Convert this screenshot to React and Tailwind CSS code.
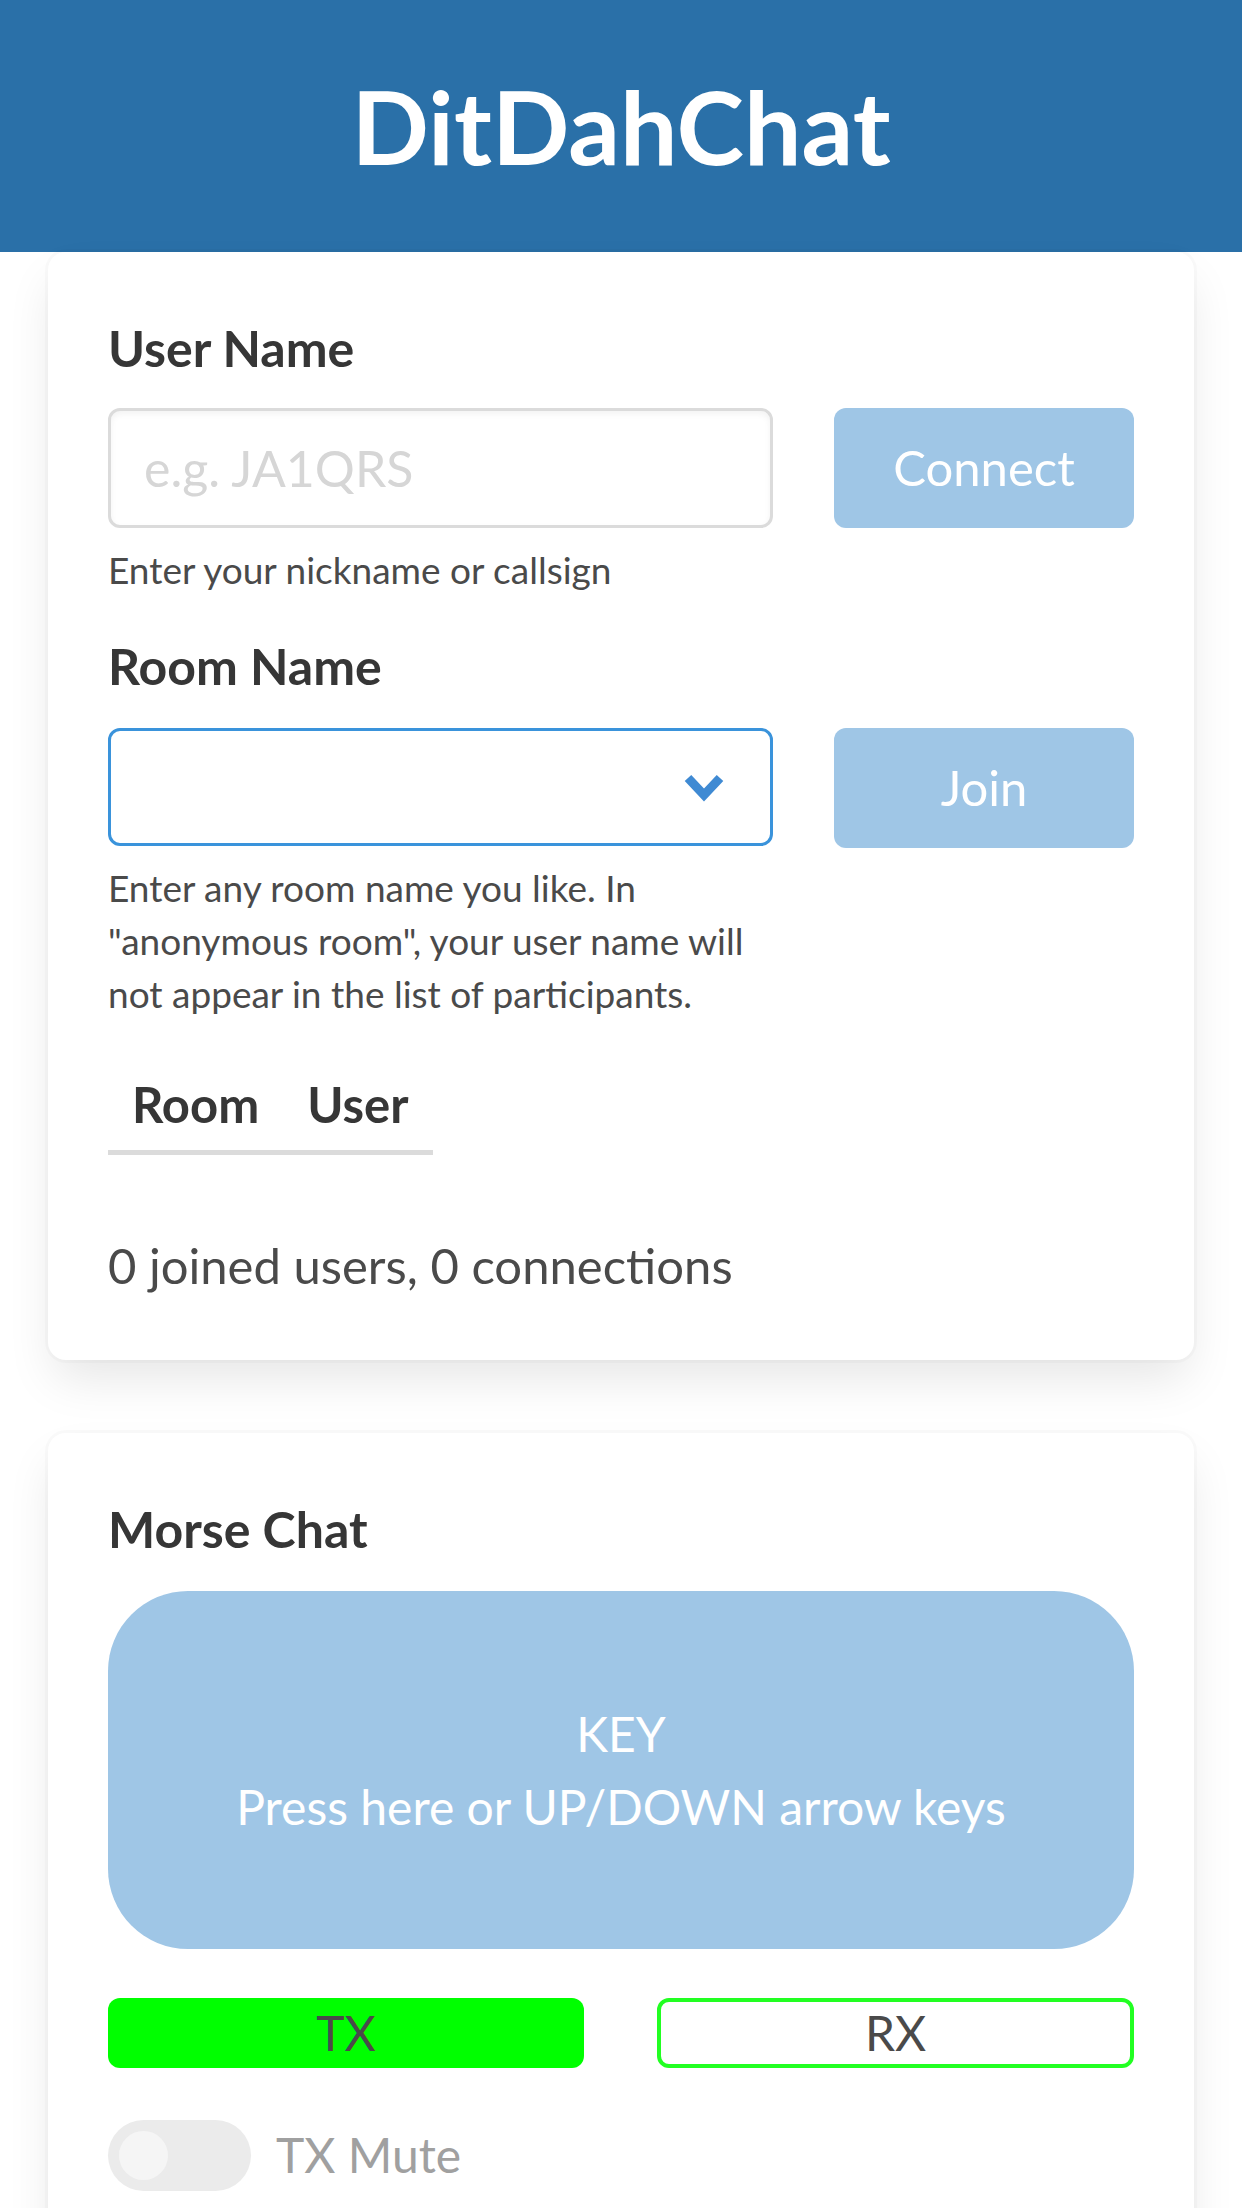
import { useState } from 'react';

const font = { fontFamily: 'Lato, "Open Sans", sans-serif' };

function ChevronDown() {
    return (
        <svg width="42" height="30" viewBox="0 0 42 30" fill="none">
            <polyline points="5,6 21,23 37,6" stroke="#3f8ad3" strokeWidth="9" strokeLinecap="butt" strokeLinejoin="miter" />
        </svg>
    );
}

export default function App() {
    const [tab, setTab] = useState('room');
    const [muted, setMuted] = useState(false);

    return (
        <div className="w-[1242px] min-h-[2208px] bg-white text-[#4a4a4a]" style={font}>
            {/* Header */}
            <header className="h-[252px] bg-[#2a70a8] flex items-center justify-center">
                <h1 className="text-[102px] font-bold text-white leading-none">DitDahChat</h1>
            </header>

            {/* Connection card */}
            <section className="mx-[48px] bg-white rounded-[18px] px-[60px] pt-[60px] pb-[59px] shadow-[0_24px_48px_-6px_rgba(10,10,10,0.1),0_0_0_3px_rgba(10,10,10,0.02)]">
                <label className="block text-[50px] leading-[72px] font-bold text-[#363636]">User Name</label>
                <div className="mt-[24px] flex gap-[61px]">
                    <div className="flex-1">
                        <input
                            placeholder="e.g. JA1QRS"
                            className="w-full h-[120px] rounded-[12px] border-[3px] border-[#dbdbdb] px-[33px] text-[50px] text-[#363636] placeholder:text-[#d6d6d6] outline-none shadow-[inset_0_3px_6px_rgba(10,10,10,0.05)]"
                            style={font}
                        />
                        <p className="mt-[15px] text-[37px] leading-[54px] text-[#4a4a4a]">Enter your nickname or callsign</p>
                    </div>
                    <button className="w-[300px] h-[120px] rounded-[12px] bg-[#9fc6e6] text-white text-[49px]" style={font}>Connect</button>
                </div>

                <label className="mt-[33px] block text-[50px] leading-[72px] font-bold text-[#363636]">Room Name</label>
                <div className="mt-[26px] flex gap-[61px]">
                    <div className="flex-1">
                        <div className="relative h-[118px] rounded-[12px] border-[3px] border-[#3a93db] bg-white">
                            <span className="absolute right-[45px] top-1/2 -translate-y-1/2 flex">
                                <ChevronDown />
                            </span>
                        </div>
                        <p className="mt-[15px] text-[37px] leading-[53px] text-[#4a4a4a]">
                            Enter any room name you like. In "anonymous room", your user name will not appear in the list of participants.
                        </p>
                    </div>
                    <button className="w-[300px] h-[120px] rounded-[12px] bg-[#9fc6e6] text-white text-[49px]" style={font}>Join</button>
                </div>

                {/* Tabs */}
                <div className="mt-[38px] flex">
                    <div className="flex border-b-[5px] border-[#dbdbdb]">
                        <button onClick={() => setTab('room')} className="px-[24px] pt-[10px] pb-[10px] text-[49px] leading-[72px] font-bold text-[#363636]" style={font}>Room</button>
                        <button onClick={() => setTab('user')} className="px-[24px] pt-[10px] pb-[10px] text-[49px] leading-[72px] font-bold text-[#363636]" style={font}>User</button>
                    </div>
                </div>

                <p className="mt-[74px] text-[49px] leading-[72px] text-[#4a4a4a]">0 joined users, 0 connections</p>
            </section>

            {/* Morse chat card */}
            <section className="mt-[73px] mx-[48px] bg-white rounded-[18px] px-[60px] pt-[60px] pb-[60px] shadow-[0_24px_48px_-6px_rgba(10,10,10,0.1),0_0_0_3px_rgba(10,10,10,0.02)]">
                <h2 className="text-[50px] leading-[72px] font-bold text-[#363636]">Morse Chat</h2>
                <button className="mt-[26px] w-full h-[358px] rounded-[80px] bg-[#9fc6e6] text-white text-[48px] leading-[73px] flex flex-col items-center justify-center" style={font}>
                    <span>KEY</span>
                    <span>Press here or UP/DOWN arrow keys</span>
                </button>

                <div className="mt-[49px] flex justify-between">
                    <div className="w-[476px] h-[70px] rounded-[12px] bg-[#00ff00] flex items-center justify-center text-[48px] text-[#4a4a4a]">TX</div>
                    <div className="w-[477px] h-[70px] rounded-[12px] border-[4px] border-[#22ff22] bg-white flex items-center justify-center text-[48px] text-[#4a4a4a]">RX</div>
                </div>

                <div className="mt-[51px] flex items-center gap-[25px]">
                    <button onClick={() => setMuted(!muted)} className="relative w-[143px] h-[71px] rounded-full bg-[#ebebeb]">
                        <span className="absolute left-[11px] top-[11px] w-[49px] h-[49px] rounded-full bg-[#f5f5f5]" />
                    </button>
                    <span className="text-[48px] leading-[72px] text-[#a0a0a0]">TX Mute</span>
                </div>
            </section>
        </div>
    );
}
